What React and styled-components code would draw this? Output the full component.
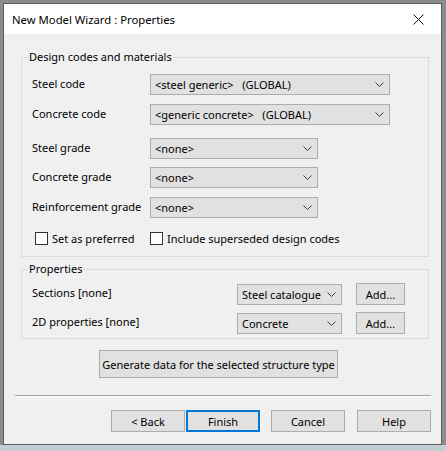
import React from "react";
import styled, { createGlobalStyle } from "styled-components";

const Global = createGlobalStyle`
  html, body {
    margin: 0;
    padding: 0;
  }
  body {
    font-family: "Noto Sans", "Open Sans", sans-serif;
    font-size: 11px;
    color: #000;
  }
`;

const Desktop = styled.div`
  width: 446px;
  height: 451px;
  box-sizing: border-box;
  padding: 3px 5px 0 3px;
  background: linear-gradient(to bottom, #8c8c8c 0, #8c8c8c 445px, #c4ccd4 445px);
  overflow: hidden;
`;

const Window = styled.div`
  width: 439px;
  height: 442px;
  box-sizing: border-box;
  border: 1px solid #5c5c5c;
  background: #f0f0f0;
  display: flex;
  flex-direction: column;
`;

const TitleBar = styled.div`
  height: 30px;
  flex: none;
  background: #fff;
  display: flex;
  align-items: center;
  justify-content: space-between;
  padding: 0 8px 0 8px;
  font-size: 11.3px;
`;

const CloseBtn = styled.div`
  width: 30px;
  height: 30px;
  display: flex;
  align-items: center;
  justify-content: center;
`;

const Body = styled.div`
  padding: 15px 12px 0 17px;
`;

const Group = styled.fieldset`
  margin: ${({ $top }) => $top || 0}px 0 0 0;
  border: 1px solid #dcdcdc;
  padding: ${({ $pad }) => $pad};
  min-width: 0;

  legend {
    padding: 0 1px;
    margin-left: -4px;
    line-height: 16px;
  }
`;

const Row = styled.div`
  display: grid;
  grid-template-columns: ${({ $cols }) => $cols};
  align-items: center;
  height: 21px;
  margin-top: ${({ $gap }) => $gap || 0}px;
`;

const Label = styled.span`
  padding-bottom: 3px;
  white-space: nowrap;
`;

const SelectBox = styled.div`
  box-sizing: border-box;
  width: ${({ $w }) => $w}px;
  height: 21px;
  background: #e1e1e1;
  border: 1px solid #adadad;
  display: flex;
  align-items: center;
  justify-content: space-between;
  padding: 0 5px 0 4px;
  white-space: pre;
`;

const CheckRow = styled.div`
  display: flex;
  align-items: center;
  margin-top: 13px;
  padding-left: 3px;
`;

const Check = styled.label`
  display: flex;
  align-items: center;
  gap: 4px;
  width: ${({ $w }) => ($w ? `${$w}px` : "auto")};
`;

const Box = styled.span`
  width: 13px;
  height: 13px;
  box-sizing: border-box;
  border: 1px solid #333;
  background: #fff;
`;

const Button = styled.div`
  box-sizing: border-box;
  width: ${({ $w }) => $w}px;
  height: ${({ $h }) => $h || 22}px;
  margin-left: ${({ $ml }) => $ml || 0}px;
  background: #e1e1e1;
  border: ${({ $focus }) => ($focus ? "2px solid #0078d7" : "1px solid #adadad")};
  display: flex;
  align-items: center;
  justify-content: center;
  white-space: nowrap;
`;

const GenerateWrap = styled.div`
  margin: 11px 0 0 78px;
`;

const Separator = styled.div`
  margin: 17px -2px 0 -6px;
  height: 1px;
  background: #a0a0a0;
  border-bottom: 1px solid #fff;
`;

const Footer = styled.div`
  display: flex;
  justify-content: flex-end;
  margin: 13px -2px 0 0;
`;

const Chevron = () => (
  <svg width="9" height="5" viewBox="0 0 9 5">
    <path d="M0.5 0.5 L4.5 4.5 L8.5 0.5" fill="none" stroke="#3c3c3c" strokeWidth="1" />
  </svg>
);

const Select = ({ w, children }) => (
  <SelectBox $w={w}>
    <span>{children}</span>
    <Chevron />
  </SelectBox>
);

const codeRows = [
  { label: "Steel code", value: "<steel generic>   (GLOBAL)", w: 240, gap: 0 },
  { label: "Concrete code", value: "<generic concrete>   (GLOBAL)", w: 240, gap: 9 },
  { label: "Steel grade", value: "<none>", w: 168, gap: 13 },
  { label: "Concrete grade", value: "<none>", w: 168, gap: 8 },
  { label: "Reinforcement grade", value: "<none>", w: 168, gap: 9 },
];

const propRows = [
  { label: "Sections [none]", value: "Steel catalogue", gap: 0 },
  { label: "2D properties [none]", value: "Concrete", gap: 8 },
];

export default function App() {
  return (
    <Desktop>
      <Global />
      <Window>
        <TitleBar>
          <span>New Model Wizard : Properties</span>
          <CloseBtn>
            <svg width="11" height="11" viewBox="0 0 11 11">
              <path d="M0.5 0.5 L10.5 10.5 M10.5 0.5 L0.5 10.5" stroke="#111" strokeWidth="1" />
            </svg>
          </CloseBtn>
        </TitleBar>
        <Body>
          <Group $pad="9px 10px 10px 10px">
            <legend>Design codes and materials</legend>
            {codeRows.map((r) => (
              <Row key={r.label} $cols="118px auto" $gap={r.gap}>
                <Label>{r.label}</Label>
                <Select w={r.w}>{r.value}</Select>
              </Row>
            ))}
            <CheckRow>
              <Check $w={115}>
                <Box />
                Set as preferred
              </Check>
              <Check>
                <Box />
                Include superseded design codes
              </Check>
            </CheckRow>
          </Group>
          <Group $top={4} $pad="6px 10px 5px 10px">
            <legend>Properties</legend>
            {propRows.map((r) => (
              <Row key={r.label} $cols="205px 105px 63px" $gap={r.gap}>
                <Label>{r.label}</Label>
                <Select w={105}>{r.value}</Select>
                <Button $w={49} $ml={14}>Add...</Button>
              </Row>
            ))}
          </Group>
          <GenerateWrap>
            <Button $w={239} $h={28}>Generate data for the selected structure type</Button>
          </GenerateWrap>
          <Separator />
          <Footer>
            <Button $w={74}>&lt; Back</Button>
            <Button $w={74} $ml={1} $focus>Finish</Button>
            <Button $w={74} $ml={11}>Cancel</Button>
            <Button $w={74} $ml={12}>Help</Button>
          </Footer>
        </Body>
      </Window>
    </Desktop>
  );
}
